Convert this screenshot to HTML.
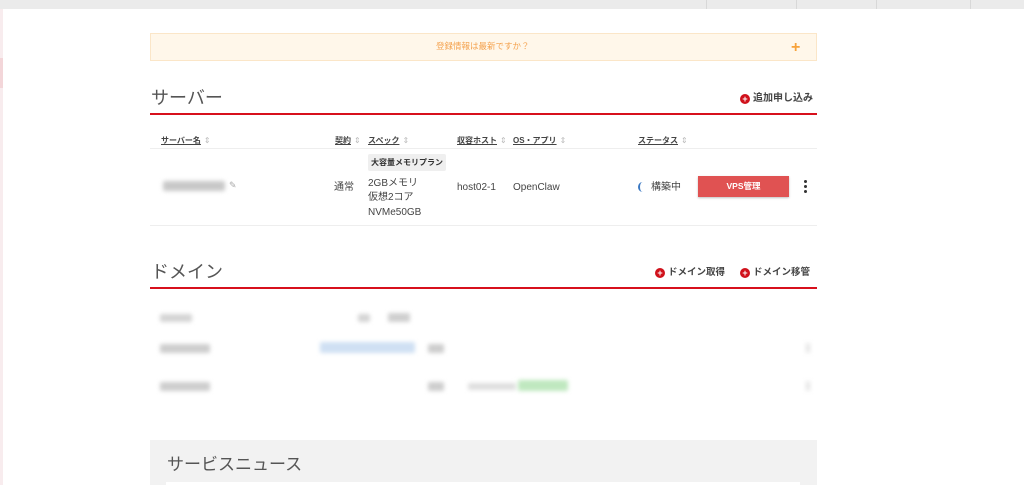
<!DOCTYPE html>
<html><head><meta charset="utf-8"><style>
*{margin:0;padding:0;box-sizing:border-box}
body{width:1024px;height:485px;overflow:hidden;background:#fff;position:relative;font-family:"Liberation Sans","Noto Sans CJK JP",sans-serif;color:#444}
.a{position:absolute;white-space:nowrap;line-height:1.2}
.th{font-size:8px;font-weight:bold;text-decoration:underline;color:#444;top:136px}
.th span{color:#bbb;text-decoration:none;display:inline-block;margin-left:3px;font-weight:normal}
.c{font-size:10px;color:#444}
.ic{display:inline-block;width:10px;height:10px;border-radius:50%;background:#d0111b;color:#fff;font-size:9px;line-height:10px;text-align:center;font-weight:bold;vertical-align:-1px;margin-right:3px}
.bl{position:absolute;filter:blur(2px);border-radius:2px}
</style></head><body>
<div class="a" style="left:0;top:0;width:1024px;height:9px;background:#ebebeb"></div>
<div class="a" style="left:706px;top:0;width:1px;height:9px;background:#d8d8d8"></div>
<div class="a" style="left:796px;top:0;width:1px;height:9px;background:#d8d8d8"></div>
<div class="a" style="left:876px;top:0;width:1px;height:9px;background:#d8d8d8"></div>
<div class="a" style="left:970px;top:0;width:1px;height:9px;background:#d8d8d8"></div>
<div class="a" style="left:0;top:9px;width:3px;height:476px;background:#f8ecee"></div>
<div class="a" style="left:0;top:58px;width:3px;height:30px;background:#f3d6d9"></div>

<div class="a" style="left:150px;top:33px;width:667px;height:28px;background:#fff7ea;border:1px solid #fbe6c8"></div>
<div class="a" style="left:436px;top:41px;font-size:8.5px;color:#f4a24e">登録情報は最新ですか？</div>
<div class="a" style="left:791px;top:38px;font-size:16px;font-weight:bold;color:#f7a23a">+</div>

<div class="a" style="left:151px;top:88px;font-size:18px;color:#555">サーバー</div>
<div class="a" style="left:740px;top:93px;font-size:10px;font-weight:bold;color:#444"><span class="ic">+</span>追加申し込み</div>
<div class="a" style="left:150px;top:113px;width:667px;height:2px;background:#d7101c"></div>

<div class="a th" style="left:161px">サーバー名<span>⇕</span></div>
<div class="a th" style="left:335px">契約<span>⇕</span></div>
<div class="a th" style="left:368px">スペック<span>⇕</span></div>
<div class="a th" style="left:457px">収容ホスト<span>⇕</span></div>
<div class="a th" style="left:513px">OS・アプリ<span>⇕</span></div>
<div class="a th" style="left:638px">ステータス<span>⇕</span></div>
<div class="a" style="left:150px;top:148px;width:667px;height:1px;background:#eee"></div>

<div class="bl" style="left:163px;top:181px;width:62px;height:10px;background:#c8c8c8"></div>
<div class="a" style="left:229px;top:180px;font-size:9px;color:#aaa">✎</div>
<div class="a c" style="left:334px;top:182px">通常</div>
<div class="a" style="left:368px;top:154px;width:78px;height:17px;background:#efefef;border-radius:2px;font-size:8px;font-weight:bold;line-height:17px;text-align:center;color:#333">大容量メモリプラン</div>
<div class="a c" style="left:368px;top:178px">2GBメモリ</div>
<div class="a c" style="left:368px;top:192px">仮想2コア</div>
<div class="a c" style="left:368px;top:207px">NVMe50GB</div>
<div class="a c" style="left:457px;top:182px">host02-1</div>
<div class="a c" style="left:513px;top:182px">OpenClaw</div>
<div class="a" style="left:638px;top:182px;width:9px;height:10px;border-radius:50%;border-left:2px solid #3a78c2"></div>
<div class="a c" style="left:651px;top:182px">構築中</div>
<div class="a" style="left:698px;top:176px;width:91px;height:21px;background:#e05252;box-shadow:0 1px 2px rgba(0,0,0,.25);color:#fff;font-size:8.5px;font-weight:bold;text-align:center;line-height:21px">VPS管理</div>
<div class="a" style="left:804px;top:180px;width:3px;height:3px;border-radius:50%;background:#333;box-shadow:0 5px 0 #333,0 10px 0 #333"></div>
<div class="a" style="left:150px;top:225px;width:667px;height:1px;background:#eee"></div>

<div class="a" style="left:151px;top:262px;font-size:18px;color:#555">ドメイン</div>
<div class="a" style="left:655px;top:267px;font-size:9.5px;font-weight:bold;color:#444"><span class="ic">+</span>ドメイン取得</div>
<div class="a" style="left:740px;top:267px;font-size:9.5px;font-weight:bold;color:#444"><span class="ic">+</span>ドメイン移管</div>
<div class="a" style="left:150px;top:287px;width:667px;height:2px;background:#d7101c"></div>

<div class="bl" style="left:160px;top:314px;width:32px;height:8px;background:#d4d4d4"></div>
<div class="bl" style="left:358px;top:314px;width:12px;height:8px;background:#d4d4d4"></div>
<div class="bl" style="left:388px;top:313px;width:22px;height:9px;background:#cfcfcf"></div>
<div class="bl" style="left:160px;top:344px;width:50px;height:9px;background:#cdcdcd"></div>
<div class="bl" style="left:320px;top:342px;width:95px;height:11px;background:#cfe0f3"></div>
<div class="bl" style="left:428px;top:344px;width:16px;height:9px;background:#cdcdcd"></div>
<div class="bl" style="left:160px;top:382px;width:50px;height:9px;background:#cdcdcd"></div>
<div class="bl" style="left:428px;top:382px;width:16px;height:9px;background:#cdcdcd"></div>
<div class="bl" style="left:468px;top:383px;width:48px;height:7px;background:#dedede"></div>
<div class="bl" style="left:518px;top:380px;width:50px;height:11px;background:#bfe8bf"></div>
<div class="bl" style="left:806px;top:343px;width:4px;height:10px;background:#e4e4e4"></div>
<div class="bl" style="left:806px;top:381px;width:4px;height:10px;background:#e4e4e4"></div>

<div class="a" style="left:150px;top:440px;width:667px;height:45px;background:#f2f2f2"></div>
<div class="a" style="left:167px;top:455px;font-size:17px;color:#555">サービスニュース</div>
<div class="a" style="left:166px;top:482px;width:634px;height:3px;background:#fff"></div>
</body></html>
